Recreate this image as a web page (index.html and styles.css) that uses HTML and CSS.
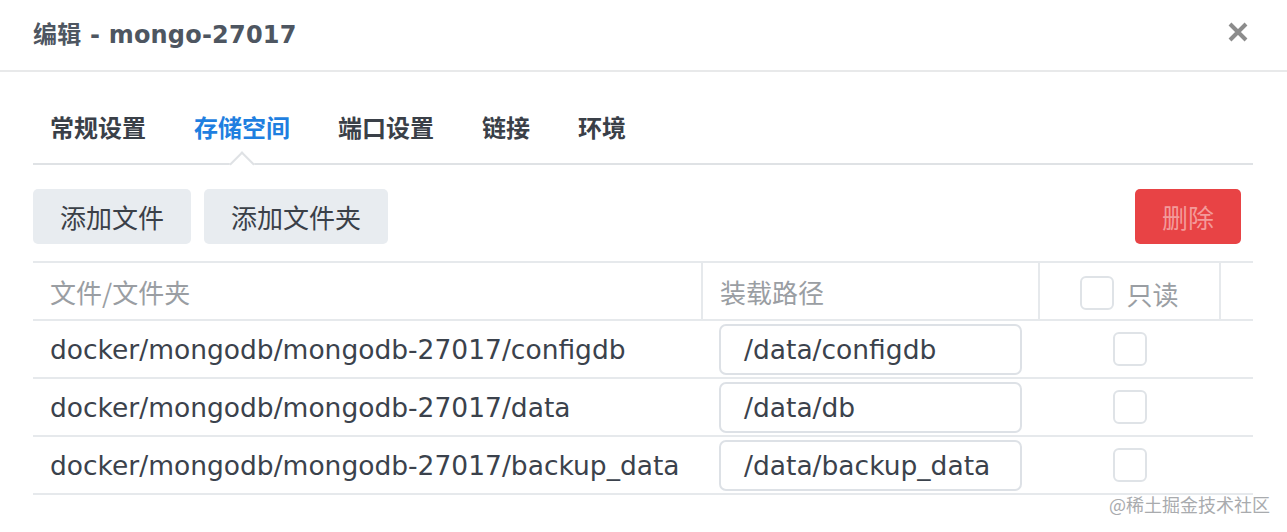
FILE: index.html
```html
<!DOCTYPE html>
<html lang="zh">
<head>
<meta charset="utf-8">
<title>编辑 - mongo-27017</title>
<link rel="stylesheet" href="styles.css">
</head>
<body>
<div class="dialog">
  <header class="head">
    <h1 class="title">编辑 - mongo-27017</h1>
    <button class="close" aria-label="关闭">
      <svg width="20" height="20" viewBox="0 0 20 20"><path d="M2 2 L18 18 M18 2 L2 18" stroke="#8c8c8c" stroke-width="4" stroke-linecap="butt"/></svg>
    </button>
  </header>
  <div class="body">
    <nav class="tabs">
      <span class="tab">常规设置</span>
      <span class="tab active">存储空间</span>
      <span class="tab">端口设置</span>
      <span class="tab">链接</span>
      <span class="tab">环境</span>
    </nav>
    <div class="toolbar">
      <button class="btn">添加文件</button>
      <button class="btn">添加文件夹</button>
      <span class="spacer"></span>
      <button class="btn danger">删除</button>
    </div>
    <table class="grid">
      <colgroup><col class="c1"><col class="c2"><col class="c3"><col class="c4"></colgroup>
      <thead>
        <tr>
          <th>文件/文件夹</th>
          <th>装载路径</th>
          <th class="ro"><span class="rowrap"><span class="cb"></span>只读</span></th>
          <th></th>
        </tr>
      </thead>
      <tbody>
        <tr>
          <td>docker/mongodb/mongodb-27017/configdb</td>
          <td><span class="input">/data/configdb</span></td>
          <td class="ro"><span class="cb"></span></td>
          <td></td>
        </tr>
        <tr>
          <td>docker/mongodb/mongodb-27017/data</td>
          <td><span class="input">/data/db</span></td>
          <td class="ro"><span class="cb"></span></td>
          <td></td>
        </tr>
        <tr>
          <td>docker/mongodb/mongodb-27017/backup_data</td>
          <td><span class="input">/data/backup_data</span></td>
          <td class="ro"><span class="cb"></span></td>
          <td></td>
        </tr>
      </tbody>
    </table>
  </div>
  <div class="watermark">@稀土掘金技术社区</div>
</div>
</body>
</html>
```
FILE: styles.css
```css
html, body {
  margin: 0;
  padding: 0;
  background: #fff;
}
body {
  font-family: "DejaVu Sans", "Noto Sans CJK SC", sans-serif;
  color: #3f4650;
}
.dialog {
  position: relative;
  width: 1287px;
  height: 532px;
  overflow: hidden;
}
.head {
  height: 64px;
  padding: 0 39px 6px 33px;
  border-bottom: 2px solid #e8e9ea;
  display: flex;
  align-items: center;
  justify-content: space-between;
}
.title {
  margin: 0;
  font-size: 24px;
  font-weight: bold;
  color: #4e5661;
  font-family: "DejaVu Sans", "Noto Sans CJK SC", sans-serif;
  letter-spacing: 0.2px;
}
.close {
  border: 0;
  background: none;
  padding: 0;
  width: 20px;
  height: 20px;
  display: block;
}
.close svg { display: block; }
.body {
  padding: 0 34px 0 33px;
}
.tabs {
  display: flex;
  gap: 48px;
  padding: 36px 0 0 17px;
  height: 55px;
  border-bottom: 2px solid #dfe2e5;
  box-sizing: content-box;
}
.tab {
  position: relative;
  font-size: 24px;
  font-weight: bold;
  color: #3a4048;
  line-height: 38px;
  font-family: "Noto Sans CJK SC", sans-serif;
}
.tab.active { color: #1f7fe0; }
.tab.active::after {
  content: "";
  position: absolute;
  left: 50%;
  bottom: -10px;
  box-sizing: border-box;
  width: 18px;
  height: 18px;
  margin-left: -9px;
  background: #fff;
  border-left: 2px solid #dfe2e5;
  border-top: 2px solid #dfe2e5;
  transform: rotate(45deg);
}
.toolbar {
  display: flex;
  gap: 13px;
  margin-top: 24px;
}
.spacer { flex: 1; }
.btn {
  height: 55px;
  padding: 0 27px;
  border: 0;
  border-radius: 5px;
  background: #e8ecf0;
  color: #3a4048;
  font-size: 26px;
  font-family: "Noto Sans CJK SC", sans-serif;
}
.btn.danger {
  background: #e84345;
  color: #f39a9a;
  margin-right: 12px;
}
.grid {
  margin-top: 17px;
  width: 1220px;
  border-collapse: collapse;
  table-layout: fixed;
  font-size: 26.5px;
}
.c1 { width: 669px; }
.c2 { width: 337px; }
.c3 { width: 181px; }
.c4 { width: 33px; }
.grid th, .grid td {
  padding: 0;
  text-align: left;
  border-top: 2px solid #e6e9ec;
  border-bottom: 2px solid #e6e9ec;
}
.grid th {
  height: 56px;
  font-size: 26px;
  font-weight: normal;
  color: #9a9ea3;
  font-family: "Noto Sans CJK SC", sans-serif;
  padding-left: 17px;
  border-right: 2px solid #e6e9ec;
}
.grid th:last-child { border-right: 0; }
.grid td {
  height: 56px;
  color: #3b424c;
  padding-left: 17px;
}
.grid .ro { text-align: center; padding-left: 0; }
.rowrap {
  display: inline-flex;
  align-items: center;
  gap: 12px;
  vertical-align: middle;
}
.cb {
  display: inline-block;
  box-sizing: border-box;
  width: 34px;
  height: 34px;
  border: 2px solid #dfe3e7;
  border-radius: 6px;
  vertical-align: middle;
  background: #fff;
}
.input {
  display: flex;
  align-items: center;
  box-sizing: border-box;
  width: 303px;
  height: 51px;
  padding-left: 23px;
  border: 2px solid #dde1e6;
  border-radius: 7px;
  color: #3b424c;
}
.watermark {
  position: absolute;
  right: 17px;
  bottom: 15px;
  font-size: 18px;
  color: #a9abae;
  font-family: "Noto Sans CJK SC", sans-serif;
}
```
